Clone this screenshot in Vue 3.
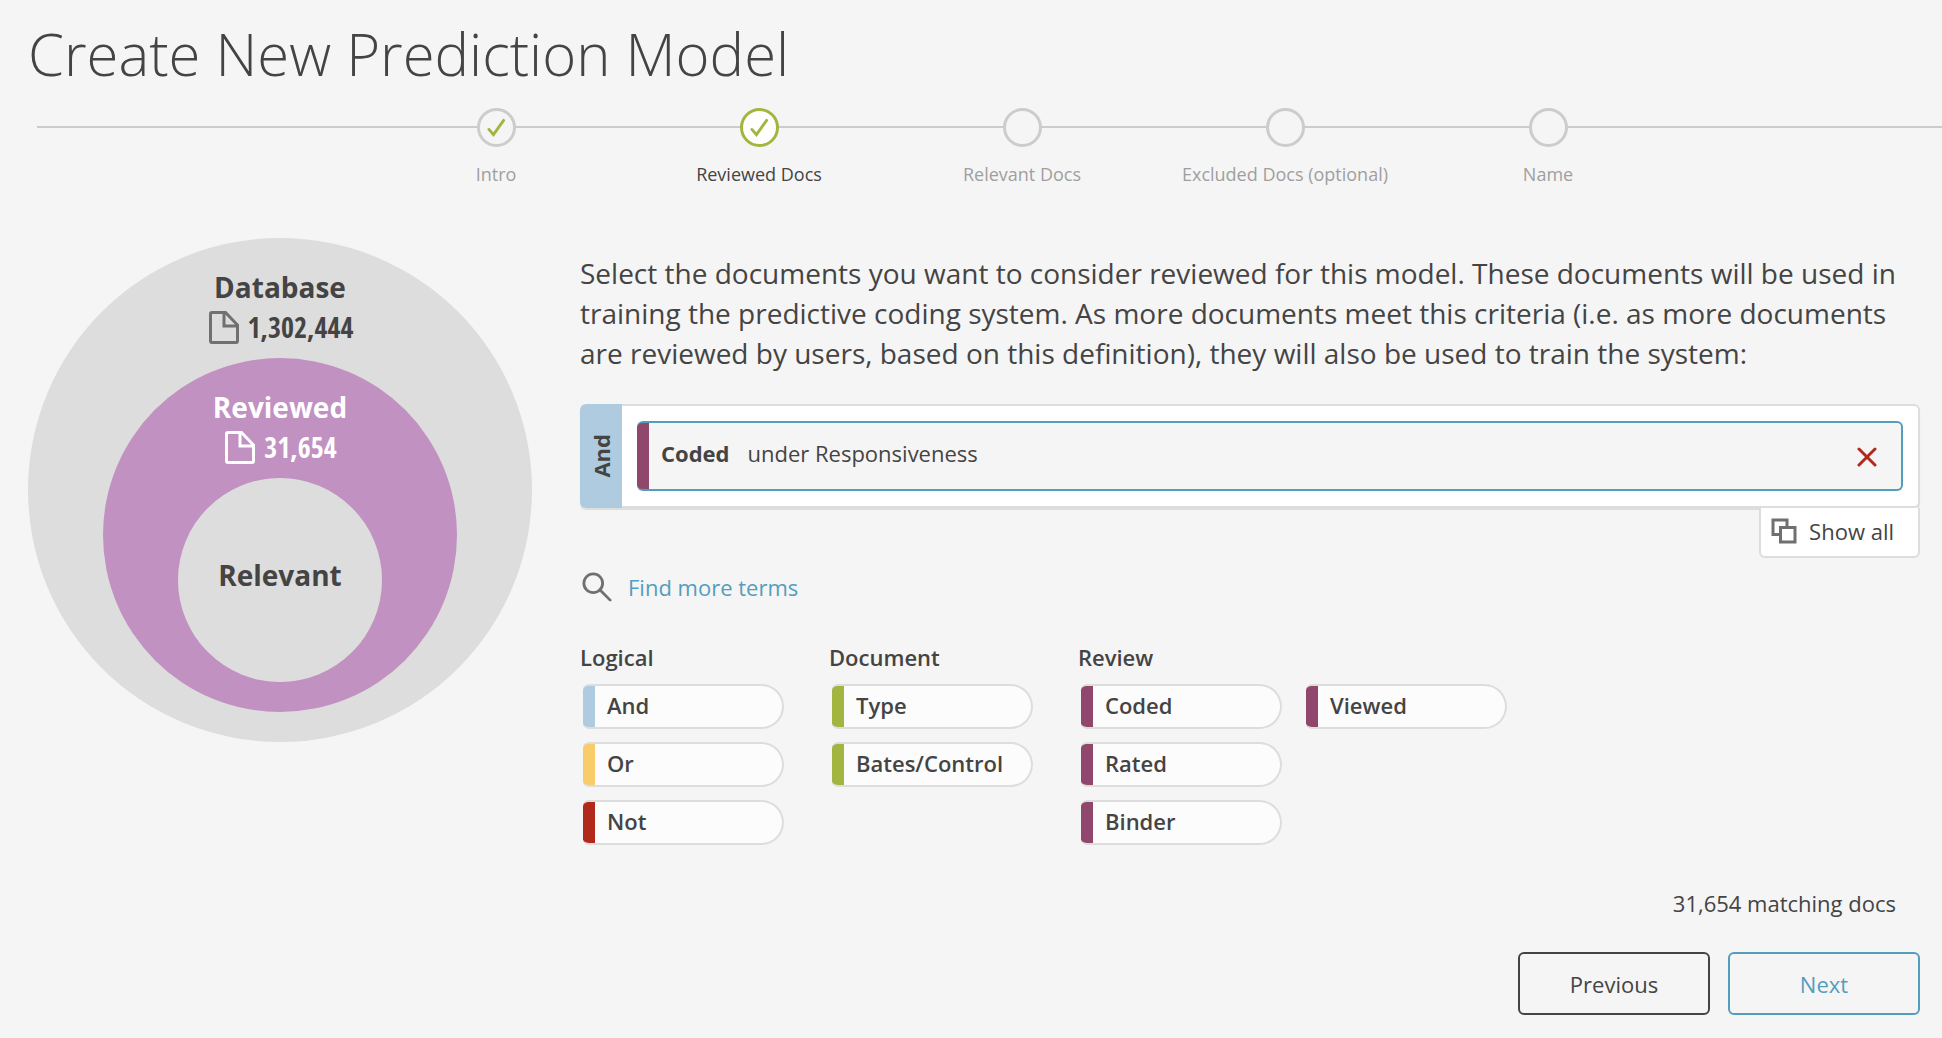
<script setup>
const steps = [
  { label: 'Intro', state: 'done' },
  { label: 'Reviewed Docs', state: 'current' },
  { label: 'Relevant Docs', state: 'todo' },
  { label: 'Excluded Docs (optional)', state: 'todo' },
  { label: 'Name', state: 'todo' },
]

const groups = [
  {
    name: 'Logical',
    columns: [
      [
        { label: 'And', tone: 'blue' },
        { label: 'Or', tone: 'yellow' },
        { label: 'Not', tone: 'red' },
      ],
    ],
  },
  {
    name: 'Document',
    columns: [
      [
        { label: 'Type', tone: 'green' },
        { label: 'Bates/Control', tone: 'green' },
      ],
    ],
  },
  {
    name: 'Review',
    columns: [
      [
        { label: 'Coded', tone: 'plum' },
        { label: 'Rated', tone: 'plum' },
        { label: 'Binder', tone: 'plum' },
      ],
      [{ label: 'Viewed', tone: 'plum' }],
    ],
  },
]
</script>

<template>
  <main class="page">
    <h1 class="title">Create New Prediction Model</h1>

    <nav class="progress" aria-label="Progress">
      <ol class="steps">
        <li v-for="step in steps" :key="step.label" class="step" :class="step.state">
          <span class="dot">
            <svg v-if="step.state !== 'todo'" width="19" height="19" viewBox="0 0 20 20" aria-hidden="true">
              <path d="M2 12L6.800 17.500L17.500 2.500" />
            </svg>
          </span>
          <span class="step-label">{{ step.label }}</span>
        </li>
      </ol>
    </nav>

    <div class="body">
      <aside class="ring database">
        <strong class="ring-name">Database</strong>
        <span class="ring-count">
          <svg class="doc" width="30" height="33" viewBox="0 0 30 33" aria-hidden="true">
            <path d="M3 1.500H16.500L28.500 14V30Q28.500 31.500 27 31.500H3Q1.500 31.500 1.500 30V3Q1.500 1.500 3 1.500Z" />
            <path d="M15 2V15H28" />
          </svg>
          1,302,444
        </span>
        <div class="ring reviewed">
          <strong class="ring-name">Reviewed</strong>
          <span class="ring-count">
            <svg class="doc" width="30" height="33" viewBox="0 0 30 33" aria-hidden="true">
              <path d="M3 1.500H16.500L28.500 14V30Q28.500 31.500 27 31.500H3Q1.500 31.500 1.500 30V3Q1.500 1.500 3 1.500Z" />
              <path d="M15 2V15H28" />
            </svg>
            31,654
          </span>
          <div class="ring relevant">
            <strong class="ring-name">Relevant</strong>
          </div>
        </div>
      </aside>

      <section class="content">
        <p class="intro">
          Select the documents you want to consider reviewed for this model. These documents will be used in
          training the predictive coding system. As more documents meet this criteria (i.e. as more documents
          are reviewed by users, based on this definition), they will also be used to train the system:
        </p>

        <div class="query">
          <div class="operator"><span>And</span></div>
          <div class="clauses">
            <div class="clause">
              <strong>Coded</strong>
              <span>under Responsiveness</span>
              <button class="remove" type="button" aria-label="Remove term">
                <svg width="20" height="20" viewBox="0 0 20 20" aria-hidden="true">
                  <path d="M2 2L18 18M18 2L2 18" />
                </svg>
              </button>
            </div>
          </div>
        </div>
        <button class="show-all" type="button">
          <svg width="26" height="26" viewBox="0 0 26 26" aria-hidden="true">
            <path d="M9 16.500H2V2H16V9" />
            <path d="M9.500 9.500H24V24H9.500Z" />
          </svg>
          Show all
        </button>

        <a class="find" href="#terms">
          <svg width="30" height="30" viewBox="0 0 32 32" aria-hidden="true">
            <circle cx="12" cy="12" r="10" />
            <path d="M19 19L30 30" />
          </svg>
          Find more terms
        </a>

        <div id="terms" class="groups">
          <section v-for="group in groups" :key="group.name" class="group">
            <h2>{{ group.name }}</h2>
            <div class="columns">
              <div v-for="(column, i) in group.columns" :key="i" class="column">
                <button v-for="term in column" :key="term.label" type="button" class="term" :class="term.tone">
                  {{ term.label }}
                </button>
              </div>
            </div>
          </section>
        </div>

        <p class="matching">31,654 matching docs</p>
        <div class="actions">
          <button type="button" class="action">Previous</button>
          <button type="button" class="action next">Next</button>
        </div>
      </section>
    </div>
  </main>
</template>

<style>
body {
  margin: 0;
  background: #f5f5f5;
}
</style>

<style scoped>
.page {
  color: #444;
  font-family: 'Open Sans', 'Noto Sans', sans-serif;
  font-size: 22px;
  line-height: 30px;
  padding: 12px 22px 22px 28px;
}

button {
  font: inherit;
  color: inherit;
  cursor: pointer;
}

svg {
  flex: none;
  fill: none;
}

.title {
  margin: 0;
  font-size: 58px;
  font-weight: 300;
  line-height: 84px;
}

.progress {
  position: relative;
  margin: 12px -22px 0 -28px;
}

.progress::before {
  content: '';
  position: absolute;
  top: 18px;
  left: 37px;
  right: 0;
  height: 2px;
  background: #ccc;
}

.steps {
  position: relative;
  display: grid;
  grid-template-columns: repeat(5, 263px);
  justify-content: center;
  margin: 0;
  padding: 0 0 0 102px;
  list-style: none;
}

.step {
  display: flex;
  flex-direction: column;
  align-items: center;
  gap: 15px;
  color: #9f9f9f;
  font-size: 18px;
  line-height: 24px;
}

.dot {
  box-sizing: border-box;
  display: grid;
  place-items: center;
  width: 39px;
  height: 39px;
  border: 3px solid #ccc;
  border-radius: 50%;
  background: #f5f5f5;
}

.dot svg {
  stroke: #a2b53f;
  stroke-width: 3;
  stroke-linecap: round;
}

.current {
  color: #444;
}

.current .dot {
  border-color: #a2b53f;
  background: #fff;
}

.body {
  display: flex;
  align-items: flex-start;
  gap: 48px;
  margin-top: 52px;
}

.ring {
  box-sizing: border-box;
  display: flex;
  flex: none;
  flex-direction: column;
  align-items: center;
  border-radius: 50%;
  font-size: 28px;
  line-height: 40px;
}

.database {
  width: 504px;
  height: 504px;
  padding-top: 29px;
  background: #ddd;
}

.reviewed {
  width: 354px;
  height: 354px;
  margin-top: 11px;
  padding-top: 29px;
  background: #c191c2;
  color: #fff;
}

.relevant {
  justify-content: center;
  width: 204px;
  height: 204px;
  margin-top: 11px;
  padding-bottom: 10px;
  background: #ddd;
  color: #444;
}

.ring-name {
  font-weight: 700;
}

.ring-count {
  display: flex;
  align-items: center;
  gap: 9px;
  padding-left: 2px;
  font-family: 'Open Sans Condensed', 'Liberation Sans Narrow', 'Open Sans', sans-serif;
  font-weight: 700;
}

.doc {
  stroke: #707070;
  stroke-width: 3;
}

.reviewed .doc {
  stroke: #fff;
}

.content {
  flex: 1;
  display: flex;
  flex-direction: column;
  min-width: 0;
  padding-top: 15px;
}

.intro {
  margin: 0 0 31px;
  font-size: 28px;
  line-height: 40px;
}

.query {
  display: flex;
  border-radius: 6px;
  box-shadow: 0 2px 1px #ddd;
}

.operator {
  display: grid;
  place-items: center;
  width: 42px;
  border-radius: 6px 0 0 6px;
  background: #aecbdf;
  font-weight: 700;
}

.operator span {
  writing-mode: vertical-rl;
  transform: rotate(180deg);
}

.clauses {
  flex: 1;
  padding: 15px;
  border: 2px solid #ddd;
  border-left: 0;
  border-radius: 0 6px 6px 0;
  background: #fff;
}

.clause {
  box-sizing: border-box;
  display: flex;
  align-items: center;
  gap: 18px;
  height: 70px;
  padding: 0 24px 6px 24px;
  border: 2px solid #549dbd;
  border-left: 0;
  border-radius: 6px;
  background: linear-gradient(to right, #8f486b 12px, #f5f5f5 12px) border-box;
}

.remove {
  display: flex;
  margin-left: auto;
  margin-top: 8px;
  padding: 0;
  border: 0;
  background: none;
}

.remove svg {
  stroke: #b0291a;
  stroke-width: 3;
  stroke-linecap: round;
}

.show-all {
  display: flex;
  align-items: center;
  align-self: flex-end;
  gap: 12px;
  position: relative;
  padding: 8px 24px 10px 10px;
  border: 2px solid #ddd;
  border-top: 0;
  border-radius: 0 0 6px 6px;
  background: #fff;
}

.show-all svg {
  stroke: #707070;
  stroke-width: 3;
}

.find {
  display: flex;
  align-items: center;
  align-self: flex-start;
  gap: 16px;
  margin-top: 14px;
  padding-left: 2px;
  color: #549dbd;
  text-decoration: none;
}

.find svg {
  stroke: #707070;
  stroke-width: 3;
  stroke-linecap: round;
}

.groups {
  display: flex;
  flex-wrap: wrap;
  gap: 45px;
  margin-top: 40px;
}

.group h2 {
  margin: 0 0 12px;
  font-size: 22px;
  font-weight: 600;
  line-height: 30px;
}

.columns {
  display: flex;
  gap: 24px;
  padding-left: 3px;
}

.column {
  display: flex;
  flex-direction: column;
  gap: 13px;
}

.term {
  box-sizing: border-box;
  width: 201px;
  height: 45px;
  padding: 0 0 3px 24px;
  border: 2px solid #ddd;
  border-left: 0;
  border-radius: 6px 23px 23px 6px;
  background: linear-gradient(to right, var(--tone) 12px, #fcfcfc 12px) border-box;
  font-weight: 600;
  text-align: left;
}

.blue { --tone: #aecbdf; }
.yellow { --tone: #f8cc69; }
.red { --tone: #b0291a; }
.green { --tone: #a2b53f; }
.plum { --tone: #8f486b; }

.matching {
  margin: 43px 24px 0;
  text-align: right;
}

.actions {
  display: flex;
  justify-content: flex-end;
  gap: 18px;
  margin-top: 34px;
}

.action {
  box-sizing: border-box;
  width: 192px;
  height: 63px;
  border: 2px solid #444;
  border-radius: 6px;
  background: transparent;
}

.next {
  border-color: #549dbd;
  color: #549dbd;
}
</style>
